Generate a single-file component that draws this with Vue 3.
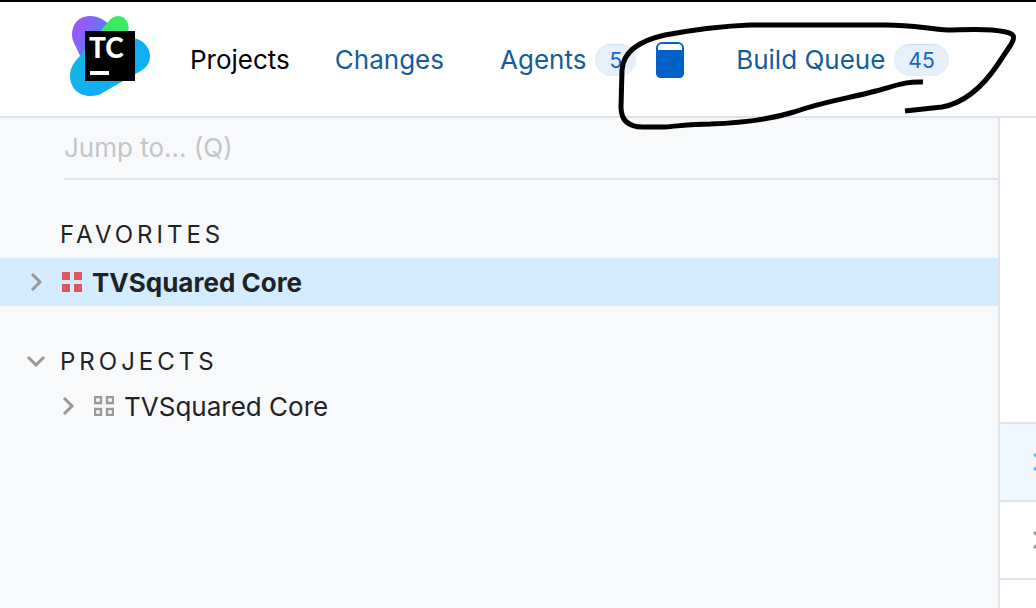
<script setup>
import { ref } from 'vue'

const query = ref('')
const sections = [
  { id: 'favorites', title: 'Favorites', collapsible: false, items: [{ name: 'TVSquared Core', selected: true }] },
  { id: 'projects', title: 'Projects', collapsible: true, items: [{ name: 'TVSquared Core', selected: false }] }
]
const rows = [{ active: true }, { active: false }]
</script>

<template>
  <div class="app">
    <header class="topbar">
      <a class="logo" href="#" aria-label="TeamCity">
        <svg width="80" height="80" viewBox="0 0 80 80">
          <defs>
            <linearGradient id="violet" x1="4" y1="16" x2="44" y2="40" gradientUnits="userSpaceOnUse">
              <stop offset="0" stop-color="#9b57fa" />
              <stop offset="0.75" stop-color="#3c8bf6" />
              <stop offset="1" stop-color="#13b0ee" />
            </linearGradient>
            <linearGradient id="green" x1="51" y1="10" x2="18" y2="54" gradientUnits="userSpaceOnUse">
              <stop offset="0" stop-color="#3bea62" />
              <stop offset="0.3" stop-color="#37e46d" />
              <stop offset="1" stop-color="#14b4e4" />
            </linearGradient>
            <linearGradient id="blue" x1="4" y1="46" x2="24" y2="62" gradientUnits="userSpaceOnUse">
              <stop offset="0" stop-color="#16b5df" />
              <stop offset="1" stop-color="#10aff4" />
            </linearGradient>
          </defs>
          <path d="M20 0C8 0 2 9 2 18C2 24 4 27 6 31L20 62L60 34L42 10L32 3C28 1 24 0 20 0Z" fill="url(#violet)" />
          <path d="M48 0C44 0 41 2 38 6L10 40L30 60L56 20C60 13 59 8 56 4C54 1 51 0 48 0Z" fill="url(#green)" />
          <path d="M64 22C73 24 80 31 80 40C80 48 75 53 69 56L34 76C30 79 25 80 20 80C8 80 0 71 0 60C0 52 4 46 10 40L24 26Z" fill="url(#blue)" />
          <rect x="15" y="15" width="50" height="50" fill="#000" />
          <text class="logo-text" x="19" y="42">TC</text>
          <rect x="20" y="55" width="19" height="4" fill="#fff" />
        </svg>
      </a>
      <nav class="nav">
        <a class="link current" href="#">Projects</a>
        <a class="link changes" href="#">Changes</a>
        <a class="link agents" href="#">Agents<span class="badge">5</span></a>
        <svg class="meter" width="28" height="36" viewBox="0 0 28 36">
          <rect x="1" y="1" width="26" height="34" rx="5" fill="#fff" stroke="#0062c9" stroke-width="2" />
          <path d="M0 8H28V31Q28 36 23 36H5Q0 36 0 31Z" fill="#0062c9" />
        </svg>
        <a class="link queue" href="#">Build Queue<span class="badge">45</span></a>
      </nav>
    </header>

    <div class="body">
      <aside class="sidebar">
        <label class="search">
          <input v-model="query" type="text" placeholder="Jump to... (Q)" aria-label="Jump to" />
        </label>
        <section v-for="s in sections" :key="s.id" class="section" :class="s.id">
          <h2 class="heading">
            <button v-if="s.collapsible" class="toggle" type="button" aria-label="Collapse projects">
              <svg width="20" height="20" viewBox="0 0 20 20"><path class="chevron" d="M2 5L10 13L18 5" /></svg>
            </button>
            {{ s.title }}
          </h2>
          <div v-for="p in s.items" :key="p.name" class="item" :class="{ selected: p.selected }">
            <button class="expand" type="button" aria-label="Expand project">
              <svg width="20" height="20" viewBox="0 0 20 20"><path class="chevron" d="M6 2L14 10L6 18" /></svg>
            </button>
            <svg class="grid-icon" width="20" height="20" viewBox="0 0 20 20">
              <path v-if="p.selected" d="M0 0H8V8H0ZM12 0H20V8H12ZM0 12H8V20H0ZM12 12H20V20H12Z" fill="#e05560" />
              <path v-else d="M1 1H7V7H1ZM13 1H19V7H13ZM1 13H7V19H1ZM13 13H19V19H13Z" fill="none" stroke="#999" stroke-width="2.4" />
            </svg>
            <a class="name" href="#">{{ p.name }}</a>
          </div>
        </section>
      </aside>

      <main class="content">
        <div class="blank"></div>
        <div v-for="(r, i) in rows" :key="i" class="row" :class="{ active: r.active }">
          <button class="open" type="button" aria-label="Open details">
            <svg width="20" height="20" viewBox="0 0 20 20"><path class="chevron" d="M2 2L10 10L2 18" /></svg>
          </button>
        </div>
      </main>
    </div>

    <svg class="scribble" width="420" height="140" viewBox="610 0 420 140">
      <path d="M905 111L942 107C964 103 982 88 998 64L1010 46C1018 34 1013 32 992 30C974 29 960 30 948 30C927 29 915 25 885 25H750C722 26 698 29 665 35C638 41 623 53 622 70L621 107C621 121 629 127 643 127H665C679 126 692 124 710 124C744 123 768 120 794 112C825 101 850 98 876 91C895 86 906 81 923 82" />
    </svg>
  </div>
</template>

<style>
body {
  background: #fff;
}
</style>

<style scoped>
.app {
  position: relative;
  display: flex;
  flex-direction: column;
  min-height: 100vh;
  overflow: hidden;
  font: 26px/32px Inter, "Liberation Sans", sans-serif;
  color: #1f2326;
}

a {
  color: inherit;
  text-decoration: none;
}

button {
  display: flex;
  padding: 0;
  border: 0;
  background: none;
}

svg {
  display: block;
  flex: none;
}

.topbar {
  display: flex;
  align-items: center;
  box-sizing: border-box;
  height: 118px;
  padding: 0 70px 6px;
  border-top: 2px solid #000;
  border-bottom: 2px solid #dfe3ea;
}

.logo-text {
  font: 900 28px Lato, sans-serif;
  fill: #fff;
}

.nav {
  display: flex;
  align-items: center;
  margin-left: 40px;
  padding-top: 8px;
  white-space: nowrap;
}

.link {
  display: flex;
  align-items: center;
  color: #135c9e;
}

.current {
  color: #000;
}

.changes {
  margin-left: 45px;
}

.agents {
  margin-left: 56px;
}

.queue {
  margin-left: 52px;
}

.meter {
  margin-left: 20px;
}

.badge {
  box-sizing: border-box;
  height: 32px;
  margin-left: 9px;
  padding: 0 14px;
  border-top: 1px solid #cfe0f3;
  border-radius: 16px;
  background: #e7eff9;
  color: #1264cf;
  font-size: 21px;
}

.body {
  display: grid;
  grid-template-columns: 1fr 36px;
  flex: 1;
}

.sidebar {
  border-right: 2px solid #dfe3ea;
  background: #f8f9fb;
}

.search {
  display: block;
  margin-left: 64px;
  border-bottom: 2px solid #dfe3ea;
}

.search input {
  display: block;
  box-sizing: border-box;
  width: 100%;
  height: 60px;
  padding: 0 0 2px;
  border: 0;
  outline: 0;
  background: none;
  font: inherit;
}

.search input::placeholder {
  color: #c3c5c8;
  opacity: 1;
}

.section {
  padding-top: 32px;
}

.heading {
  display: flex;
  align-items: center;
  height: 46px;
  margin: 0;
  padding-left: 60px;
  font-size: 24px;
  font-weight: 400;
  letter-spacing: 4px;
  text-transform: uppercase;
}

.toggle {
  margin-left: -34px;
  margin-right: 14px;
}

.chevron {
  fill: none;
  stroke: #999;
  stroke-width: 3;
}

.item {
  display: flex;
  align-items: center;
  height: 48px;
  padding-left: 26px;
}

.projects {
  padding-top: 33px;
}

.projects .item {
  height: 42px;
  padding-left: 58px;
}

.selected {
  background: #d4ecff;
  font-weight: 700;
}

.grid-icon {
  margin: 0 10px 0 16px;
}

.name {
  padding-top: 2px;
}

.content {
  overflow: hidden;
}

.blank {
  height: 304px;
}

.row {
  display: flex;
  align-items: center;
  height: 76px;
  padding-left: 32px;
  border-top: 2px solid #dfe3ea;
}

.row:last-child {
  border-bottom: 2px solid #dfe3ea;
}

.active {
  background: #f0f8ff;
}

.active .chevron {
  stroke: #6ebcff;
}

.scribble {
  position: absolute;
  top: 0;
  left: 610px;
  pointer-events: none;
}

.scribble path {
  fill: none;
  stroke: #000;
  stroke-width: 5;
  stroke-linejoin: round;
}
</style>
